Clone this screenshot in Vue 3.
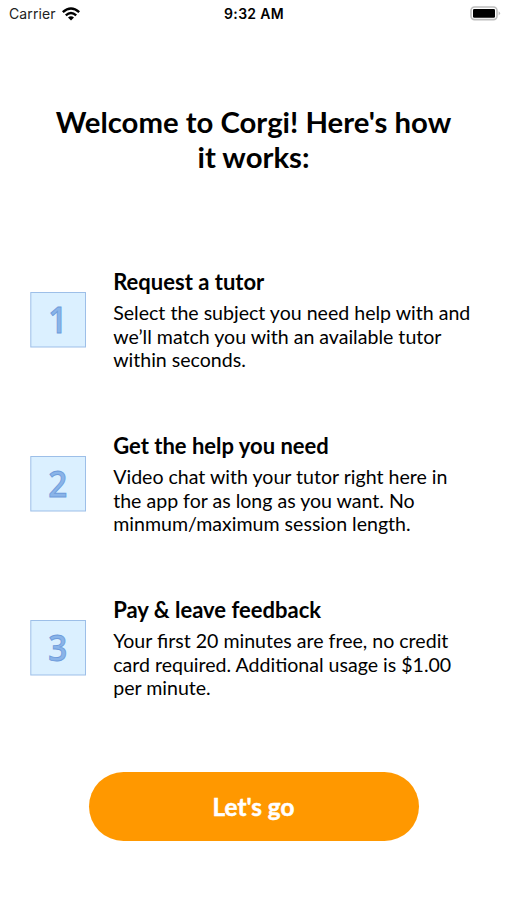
<script setup>
import { ref } from 'vue';

const steps = ref([
    {
        number: 1,
        title: 'Request a tutor',
        lines: ['Select the subject you need help with and', 'we’ll match you with an available tutor', 'within seconds.'],
    },
    {
        number: 2,
        title: 'Get the help you need',
        lines: ['Video chat with your tutor right here in', 'the app for as long as you want. No', 'minmum/maximum session length.'],
    },
    {
        number: 3,
        title: 'Pay & leave feedback',
        lines: ['Your first 20 minutes are free, no credit', 'card required. Additional usage is $1.00', 'per minute.'],
    },
]);
</script>

<template>
    <div class="screen">
        <header class="status_bar">
            <div class="carrier">
                <span>Carrier</span>
                <svg class="wifi" viewBox="0 0 18 14" width="18" height="14">
                    <path d="M0.8 5.2 Q9 -2.4 17.2 5.2 M3.8 8.3 Q9 3.6 14.2 8.3" fill="none" stroke="#000" stroke-width="2.4" />
                    <path d="M6 10.4 Q9 8 12 10.4 L9 13.4 Z" fill="#000" />
                </svg>
            </div>
            <div class="time">9:32 AM</div>
            <svg class="battery" viewBox="0 0 31 15" width="31" height="15">
                <rect x="1" y="1" width="26" height="12.6" rx="3.5" fill="#fff" stroke="#bdbdbd" stroke-width="1.6" />
                <rect x="3" y="3" width="22" height="8.8" rx="1.3" fill="#000" />
                <path d="M28.6 5.2 Q31.6 7.3 28.6 9.4 Z" fill="#bdbdbd" />
            </svg>
        </header>

        <h1 class="heading">Welcome to Corgi! Here's how<br />it works:</h1>

        <main class="steps">
            <section v-for="step in steps" :key="step.number" class="step">
                <svg class="step_number" viewBox="0 0 56 56" width="56" height="56">
                    <rect x="0.8" y="0.5" width="54.7" height="54.5" fill="#dbf0ff" stroke="#9dbfe8" />
                    <text transform="translate(27.8 41.2) scale(0.9 1)" text-anchor="middle">{{ step.number }}</text>
                </svg>
                <div class="step_text">
                    <h2>{{ step.title }}</h2>
                    <p>
                        <span v-for="line in step.lines" :key="line">{{ line }}</span>
                    </p>
                </div>
            </section>
        </main>

        <button class="start_button">Let's go</button>
    </div>
</template>

<style>
body {
    margin: 0;
    background: #fff;
}
</style>

<style scoped>
.screen {
    width: 507px;
    height: 900px;
    overflow: hidden;
    background: #fff;
    color: #000;
    font-family: Lato, sans-serif;
}

.status_bar {
    display: grid;
    grid-template-columns: 1fr auto 1fr;
    align-items: center;
    height: 27px;
    padding: 0 6px 0 9px;
    box-sizing: border-box;
    font-family: Inter, sans-serif;
    font-size: 14px;
}

.carrier {
    display: flex;
    align-items: center;
    gap: 6px;
    color: #222;
    letter-spacing: 0.12px;
}

.time {
    margin-right: 2px;
    font-weight: 600;
    letter-spacing: 0.3px;
}

.battery {
    justify-self: end;
}

.heading {
    margin: 77px 0 0;
    font-size: 29.3px;
    line-height: 35.4px;
    font-weight: 700;
    text-align: center;
}

.steps {
    display: flex;
    flex-direction: column;
    gap: 60px;
    margin-top: 93.2px;
    padding-left: 30px;
}

.step {
    display: flex;
    align-items: center;
    gap: 27.2px;
    height: 104px;
}

.step_number {
    flex: none;
    font-family: "Open Sans", sans-serif;
    font-size: 37px;
    font-weight: 600;
}

.step_number text {
    fill: #8ab4e8;
    stroke: #6d9bdb;
    stroke-width: 0.9px;
}

.step_text h2 {
    margin: 0;
    font-size: 22px;
    line-height: 28px;
    font-weight: 700;
}

.step_text p {
    margin: 5px 0 0;
    font-size: 19.57px;
    line-height: 23.6px;
}

.step_text span {
    display: block;
    white-space: nowrap;
}

.start_button {
    display: block;
    width: 330px;
    height: 69px;
    margin: 72px auto 0;
    padding: 0;
    border: none;
    border-radius: 35px;
    background: #ff9800;
    color: #fff;
    font-family: Lato, sans-serif;
    font-size: 24.3px;
    font-weight: 700;
    -webkit-text-stroke: 0.5px #fff;
}
</style>
